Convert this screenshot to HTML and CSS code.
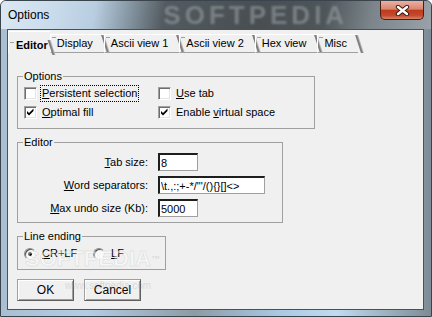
FILE: index.html
```html
<!DOCTYPE html>
<html lang="en">
<head>
    <meta charset="UTF-8">
    <title>Options</title>
    <link rel="stylesheet" href="styles.css">
</head>
<body>
    <div class="window">
        <div class="titlebar">
            <span class="title">Options</span>
            <span class="brand">SOFTPEDIA</span>
            <button class="close" title="Close">
                <svg width="15" height="11" viewBox="0 0 15 11">
                    <path d="M3 2 L12 9 M12 2 L3 9" stroke="#3a1a12" stroke-width="4.4" stroke-linecap="round"/>
                    <path d="M3 2 L12 9 M12 2 L3 9" stroke="#fff" stroke-width="2.4" stroke-linecap="round"/>
                </svg>
            </button>
        </div>

        <div class="client">
            <div class="tabs">
                <div class="tab active">Editor</div>
                <div class="tab">Display</div>
                <div class="tab">Ascii view 1</div>
                <div class="tab">Ascii view 2</div>
                <div class="tab">Hex view</div>
                <div class="tab">Misc</div>
            </div>

            <div class="page">
                <fieldset class="group group-options">
                    <legend>Options</legend>
                    <div class="checks">
                        <div class="check">
                            <span class="box"></span>
                            <span class="label focused"><u>P</u>ersistent selection</span>
                        </div>
                        <div class="check">
                            <span class="box"></span>
                            <span class="label"><u>U</u>se tab</span>
                        </div>
                        <div class="check">
                            <span class="box"><svg width="11" height="11" viewBox="0 0 11 11"><path d="M2 4 L4 6 L8.5 1.5 L8.5 4 L4 8.5 L2 6.5 Z"/></svg></span>
                            <span class="label"><u>O</u>ptimal fill</span>
                        </div>
                        <div class="check">
                            <span class="box"><svg width="11" height="11" viewBox="0 0 11 11"><path d="M2 4 L4 6 L8.5 1.5 L8.5 4 L4 8.5 L2 6.5 Z"/></svg></span>
                            <span class="label">Enable <u>v</u>irtual space</span>
                        </div>
                    </div>
                </fieldset>

                <fieldset class="group group-editor">
                    <legend>Editor</legend>
                    <div class="fields">
                        <label class="field-label" for="tabSize"><u>T</u>ab size:</label>
                        <input id="tabSize" class="short" type="text" value="8">
                        <label class="field-label" for="wordSep"><u>W</u>ord separators:</label>
                        <input id="wordSep" class="long" type="text" value="\t.,:;+-*/&quot;'/(){}[]<>">
                        <label class="field-label" for="maxUndo"><u>M</u>ax undo size (Kb):</label>
                        <input id="maxUndo" class="short" type="text" value="5000">
                    </div>
                </fieldset>

                <fieldset class="group group-line">
                    <legend>Line ending</legend>
                    <div class="radios">
                        <div class="radio-item first">
                            <span class="radio checked"></span>
                            <span class="label"><u>C</u>R+LF</span>
                        </div>
                        <div class="radio-item">
                            <span class="radio"></span>
                            <span class="label"><u>L</u>F</span>
                        </div>
                    </div>
                </fieldset>

                <div class="buttons">
                    <button class="btn">OK</button>
                    <button class="btn">Cancel</button>
                </div>
            </div>

            <div class="watermark">SOFTPEDIA<sup>™</sup></div>
            <div class="watermark-url">www.softpedia.com</div>
        </div>
    </div>
</body>
</html>
```

FILE: styles.css
```css
body {
    margin: 0;
    font-family: "Liberation Sans", Arial, sans-serif;
    font-size: 11px;
    color: #000;
    background: #fff;
}
.window {
    width: 432px;
    height: 317px;
    box-sizing: border-box;
    border: 1px solid #39444d;
    border-radius: 6px 6px 0 0;
    display: flex;
    flex-direction: column;
    overflow: hidden;
    background: linear-gradient(90deg, #a9bfd1 0%, #b4cde3 20%, #8d9ba5 45%, #a9c9e4 65%, #c0dbef 78%, #7d8b95 100%);
}
.titlebar {
    height: 28px;
    display: flex;
    align-items: flex-start;
    flex-shrink: 0;
    background: linear-gradient(100deg, #dbe8f3 0%, #cadcec 12%, #b8cde0 22%, #8596a2 30%, #535b60 38%, #484e52 60%, #4f565a 75%, #7b858b 86%, #98a2a8 100%);
}
.title {
    margin: 7px 0 0 7px;
    font-size: 12px;
    line-height: 15px;
}
.brand {
    margin: 1px 0 0 114px;
    font-size: 26px;
    font-weight: bold;
    line-height: 26px;
    letter-spacing: 4px;
    color: rgba(150, 158, 164, 0.6);
    filter: blur(1.2px);
}
.close {
    margin: 0 7px 0 auto;
    width: 44px;
    height: 19px;
    padding: 0;
    border: 1px solid #4d1d12;
    border-top: none;
    border-radius: 0 0 5px 5px;
    display: flex;
    align-items: center;
    justify-content: center;
    background: linear-gradient(180deg, #eab0a2 0%, #d98670 45%, #c23a1e 52%, #c24a2e 80%, #d9836a 100%);
}
.close svg {
    display: block;
}

.client {
    flex: 1;
    margin: 0 7px 6px 6px;
    border: 1px solid #45525c;
    background: #f0f0f0;
    position: relative;
}

/* tab strip */
.tabs {
    display: flex;
    align-items: flex-end;
    height: 22px;
    padding-top: 1px;
}
.tab {
    position: relative;
    height: 17px;
    line-height: 17px;
    padding: 0 11px 0 6px;
    border-top: 1px solid #fff;
    border-left: 1px solid #fff;
    border-bottom: 1px solid #a0a0a0;
    white-space: nowrap;
}
.tab::before {
    content: "";
    position: absolute;
    left: 1px;
    top: 2px;
    width: 4px;
    height: 1px;
    background: #a0a0a0;
}
.tab::after {
    content: "";
    position: absolute;
    top: 0;
    bottom: -1px;
    right: -2px;
    width: 2px;
    background: #808080;
    box-shadow: 1px 0 0 #b8b8b8;
    transform: skewX(18deg);
}
.tab.active {
    z-index: 1;
    height: 16px;
    line-height: 16px;
    padding: 5px 2px 0 7px;
    border-bottom: none;
    font-weight: bold;
    background: #f0f0f0;
}
.tab.active::before {
    top: 10px;
}
.tab.active::after {
    top: 8px;
    bottom: -2px;
}

/* page content */
.page {
    padding: 17px 0 0 9px;
}
.group {
    margin: 0;
    padding: 1px 0 6px;
    border: 1px solid #a0a0a0;
    min-width: 0;
    box-sizing: border-box;
}
.group legend {
    margin-left: 5px;
    padding: 0 1px;
    line-height: 13px;
}
.group-options {
    width: 298px;
}
.group-editor {
    width: 266px;
    margin-top: 7px;
    padding: 4px 0 5px;
}
.group-line {
    width: 149px;
    margin-top: 7px;
}

.checks {
    display: grid;
    grid-template-columns: 134px auto;
    grid-auto-rows: 19px;
    padding-left: 6px;
}
.check,
.radio-item {
    display: flex;
    align-items: center;
    gap: 4px;
}
.label {
    padding: 1px 1px;
    line-height: 13px;
    white-space: nowrap;
}
.label.focused {
    outline: 1px dotted #000;
}
.box {
    width: 13px;
    height: 13px;
    box-sizing: border-box;
    flex-shrink: 0;
    border: 1px solid;
    border-color: #a0a0a0 #fff #fff #a0a0a0;
    box-shadow: inset 1px 1px 0 #6d6d6d, inset -1px -1px 0 #e3e3e3;
    background: #fff;
}
.box svg {
    display: block;
}

.fields {
    display: grid;
    grid-template-columns: 130px auto;
    column-gap: 10px;
    row-gap: 5px;
    align-items: center;
}
.field-label {
    text-align: right;
    white-space: nowrap;
}
.fields input {
    justify-self: start;
    box-sizing: border-box;
    height: 18px;
    margin: 0;
    padding: 0 0 0 1px;
    font-family: "Liberation Sans", Arial, sans-serif;
    font-size: 11px;
    color: #000;
    background: #fff;
    border-style: solid;
    border-width: 2px 1px 1px 2px;
    border-color: #1e1e1e #a0a0a0 #a0a0a0 #1e1e1e;
    outline: none;
}
.fields input.short {
    width: 40px;
}
.fields input.long {
    width: 107px;
}

.radios {
    display: flex;
    height: 19px;
    padding-left: 6px;
}
.radio-item {
    gap: 5px;
}
.radio-item.first {
    width: 69px;
}
.radio {
    position: relative;
    width: 12px;
    height: 12px;
    box-sizing: border-box;
    flex-shrink: 0;
    border-radius: 50%;
    border: 1px solid;
    border-color: #8a8a8a #e8e8e8 #e8e8e8 #8a8a8a;
    box-shadow: inset 1px 1px 0 #555;
    background: #fff;
}
.radio.checked::after {
    content: "";
    position: absolute;
    left: 3px;
    top: 3px;
    width: 4px;
    height: 4px;
    border-radius: 50%;
    background: #000;
}

.buttons {
    display: flex;
    gap: 10px;
    margin-top: 9px;
}
.btn {
    width: 57px;
    height: 22px;
    padding: 0;
    font-family: "Liberation Sans", Arial, sans-serif;
    font-size: 12px;
    color: #000;
    background: #f0f0f0;
    border: 1px solid;
    border-color: #a0a0a0 #5f5f5f #5f5f5f #a0a0a0;
    box-shadow: inset 1px 1px 0 #fff, inset -1px -1px 0 #a0a0a0;
}

/* faint watermark laid over the dialog */
.watermark {
    position: absolute;
    left: 17px;
    top: 218px;
    font-size: 22px;
    font-weight: bold;
    line-height: 22px;
    color: rgba(255, 255, 255, 0.45);
    -webkit-text-stroke: 1px rgba(150, 150, 150, 0.18);
    pointer-events: none;
}
.watermark sup {
    font-size: 9px;
    vertical-align: top;
    -webkit-text-stroke: 0;
    color: rgba(150, 150, 150, 0.25);
}
.watermark-url {
    position: absolute;
    left: 57px;
    top: 250px;
    font-size: 10px;
    color: rgba(140, 140, 140, 0.25);
    pointer-events: none;
}
```
